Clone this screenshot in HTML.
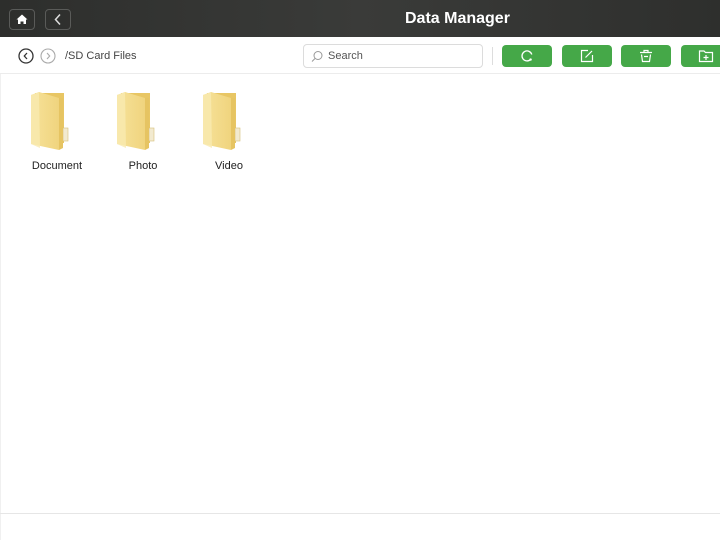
<!DOCTYPE html>
<html><head><style>
*{margin:0;padding:0;box-sizing:border-box}
body{width:720px;height:540px;background:#fff;font-family:"Liberation Sans",sans-serif;position:relative;overflow:hidden}
.hdr{position:absolute;left:0;top:0;width:720px;height:37px;background:linear-gradient(90deg,#2d2e2c,#3a3b39 50%,#2e2f2d)}
.hb{position:absolute;top:9px;width:26px;height:21px;border:1px solid #5a5b59;border-radius:4px}
.title{position:absolute;left:405px;top:10px;color:#fff;font-weight:bold;font-size:16px}
.bar{position:absolute;top:37px;left:0;width:720px;height:37px;border-bottom:1px solid #ececec}
.circ{position:absolute;top:48px;width:16px;height:16px;border-radius:50%}
.path{position:absolute;left:65px;top:50px;font-size:11px;color:#444}
.search{position:absolute;left:303px;top:44px;width:180px;height:24px;border:1px solid #dcdcdc;border-radius:4px}
.search span{position:absolute;left:24px;top:5px;font-size:11px;color:#555}
.div{position:absolute;left:492px;top:47px;width:1px;height:18px;background:#ddd}
.gb{position:absolute;top:45px;width:50px;height:22px;background:#45a848;border-radius:4px}
.gb svg{position:absolute;left:17px;top:3px}
.f{position:absolute;top:92px;width:60px;text-align:center;font-size:11px;color:#222}
.f svg{display:block;margin:0 0 8px 4px}
.bot{position:absolute;left:0;top:513px;width:720px;height:1px;background:#e6e6e6}
.lft{position:absolute;left:0;top:74px;width:1px;height:466px;background:#f0f0f0}
</style></head><body>
<div class="hdr">
 <div class="hb" style="left:9px"><svg width="24" height="19" viewBox="0 0 24 19"><path d="M12 4.5 L6.5 9.5 H8 V14 H10.5 V11.5 H13.5 V14 H16 V9.5 H17.5 Z" fill="#fff"/></svg></div>
 <div class="hb" style="left:45px"><svg width="24" height="19" viewBox="0 0 24 19"><path d="M14 4.5 L9.5 9.5 L14 14.5" stroke="#ddd" stroke-width="1.5" fill="none"/></svg></div>
 <div class="title">Data Manager</div>
</div>
<div class="bar"></div>
<div class="lft"></div>
<svg class="circ" style="left:18px" width="16" height="16" viewBox="0 0 16 16"><circle cx="8" cy="8" r="7" stroke="#333" stroke-width="1.3" fill="none"/><path d="M9 5 L6.3 8 L9 11" stroke="#333" stroke-width="1.3" fill="none"/></svg>
<svg class="circ" style="left:40px" width="16" height="16" viewBox="0 0 16 16"><circle cx="8" cy="8" r="7" stroke="#aaa" stroke-width="1.1" fill="none"/><path d="M7 5 L9.7 8 L7 11" stroke="#aaa" stroke-width="1.1" fill="none"/></svg>
<div class="path">/SD Card Files</div>
<div class="search"><svg style="position:absolute;left:7px;top:5px" width="13" height="13" viewBox="0 0 13 13"><circle cx="7" cy="5.5" r="4" stroke="#999" fill="none"/><path d="M4 8.5 L1 11.5" stroke="#999"/></svg><span>Search</span></div>
<div class="div"></div>
<div class="gb" style="left:502px"><svg width="16" height="16" viewBox="0 0 16 16"><path d="M11.5 11.5 A5 5 0 1 1 12.8 6.5" stroke="#fff" stroke-width="1.3" fill="none"/><circle cx="11.6" cy="11.6" r="1.2" fill="#fff"/></svg></div>
<div class="gb" style="left:562px"><svg width="16" height="16" viewBox="0 0 16 16"><path d="M9 2.5 H2.5 V13.5 H13.5 V7" stroke="#fff" stroke-width="1.2" fill="none"/><path d="M6.5 9.5 L13 3" stroke="#fff" stroke-width="1.2"/></svg></div>
<div class="gb" style="left:621px"><svg width="16" height="16" viewBox="0 0 16 16"><path d="M2 4.5 H14 M6 4.5 V2.5 H10 V4.5 M3.5 6.5 L4.5 13.5 H11.5 L12.5 6.5 M6 8.5 H10" stroke="#fff" stroke-width="1.2" fill="none"/></svg></div>
<div class="gb" style="left:681px"><svg width="16" height="16" viewBox="0 0 16 16"><path d="M1.5 3 H6 L7.5 4.5 H14.5 V13.5 H1.5 Z" stroke="#fff" stroke-width="1.2" fill="none"/><path d="M8 7 V12 M5.5 9.5 H10.5" stroke="#fff" stroke-width="1.2"/></svg></div>
<svg width="0" height="0" style="position:absolute"><defs>
<linearGradient id="g2" x1="0" y1="0" x2="1" y2="0"><stop offset="0" stop-color="#f6e29a"/><stop offset="1" stop-color="#f0d47e"/></linearGradient>
<g id="fo">
<rect x="4" y="1" width="29" height="50" fill="#e8c664"/>
<rect x="32" y="36" width="5" height="13" fill="#f2ead0" stroke="#d6bf7a" stroke-width=".6"/>
<path d="M0 3 L8 0 L28 6 L28 58 L0 52 Z" fill="url(#g2)"/>
<path d="M28 6 L32 6 L32 56 L28 58 Z" fill="#e6c462"/>
<path d="M0 3 L8 0 L9 56 L0 52 Z" fill="#f9eab0" opacity=".8"/>
</g></defs></svg>
<div class="f" style="left:27px"><svg width="40" height="60" viewBox="0 0 40 60"><use href="#fo"/></svg>Document</div>
<div class="f" style="left:113px"><svg width="40" height="60" viewBox="0 0 40 60"><use href="#fo"/></svg>Photo</div>
<div class="f" style="left:199px"><svg width="40" height="60" viewBox="0 0 40 60"><use href="#fo"/></svg>Video</div>
<div class="bot"></div>
</body></html>
